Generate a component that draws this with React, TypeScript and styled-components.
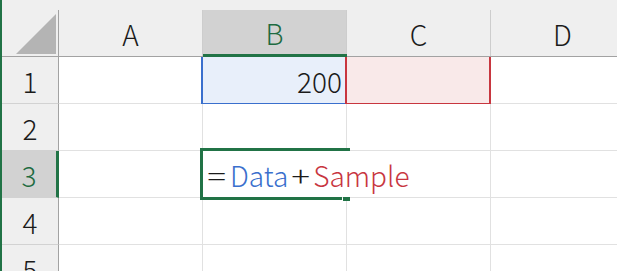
import React from "react";
import styled, { createGlobalStyle, css } from "styled-components";

const GREEN = "#217346";
const HEADER_BG = "#efefef";
const HEADER_SEL_BG = "#d2d2d2";
const HEADER_EDGE = "#a2a2a2";
const HEADER_SEP = "#cdcdcd";
const GRID_LINE = "#e1e1e1";

const Global = createGlobalStyle`
  html, body {
    margin: 0;
    padding: 0;
    background: #ffffff;
    overflow: hidden;
  }
  body {
    width: 617px;
    height: 271px;
    font-family: "Noto Sans CJK JP", "Noto Sans", sans-serif;
  }
`;

const Sheet = styled.div`
  display: flex;
  width: 617px;
  height: 271px;
  overflow: hidden;
`;

const ActiveEdge = styled.div`
  flex: 0 0 2px;
  background: ${GREEN};
`;

const Grid = styled.div`
  display: grid;
  grid-template-columns: 57px repeat(4, 144px);
  grid-template-rows: 57px;
  grid-auto-rows: 47px;
  font-size: 28px;
  font-weight: 300;
  color: #1b1b1b;
`;

const HeaderCell = styled.div<{ $selected?: boolean }>`
  box-sizing: border-box;
  padding-top: 10px;
  background: ${HEADER_BG};
  border-bottom: ${(p) => (p.$selected ? `3px solid ${GREEN}` : `1px solid ${HEADER_EDGE}`)};
`;

const HeaderLabel = styled.div<{ $selected?: boolean; $edge?: boolean }>`
  box-sizing: border-box;
  height: 100%;
  display: flex;
  align-items: center;
  justify-content: center;
  padding-top: 1px;
  background: ${(p) => (p.$selected ? HEADER_SEL_BG : HEADER_BG)};
  color: ${(p) => (p.$selected ? "#1e6b41" : "#1b1b1b")};
  border-right: 1px solid ${(p) => (p.$edge ? HEADER_EDGE : HEADER_SEP)};
  line-height: 1;
`;

const CornerMark = styled.svg`
  display: block;
  margin: 4px 0 0 14px;
  align-self: flex-start;
`;

const CornerLabel = styled(HeaderLabel)`
  justify-content: flex-start;
  align-items: flex-start;
  padding-top: 0;
`;

const RowHeader = styled.div<{ $selected?: boolean }>`
  box-sizing: border-box;
  display: flex;
  align-items: center;
  justify-content: center;
  padding-top: 1px;
  line-height: 1;
  background: ${(p) => (p.$selected ? HEADER_SEL_BG : HEADER_BG)};
  color: ${(p) => (p.$selected ? "#1e6b41" : "#1b1b1b")};
  border-right: ${(p) => (p.$selected ? `3px solid ${GREEN}` : `1px solid ${HEADER_EDGE}`)};
  border-bottom: 1px solid #d2d2d2;
`;

type RangeTone = "blue" | "red";

const rangeStyles: Record<RangeTone, { bg: string; line: string }> = {
  blue: { bg: "#e8effa", line: "#3a6fcd" },
  red: { bg: "#f9e9e9", line: "#c8363f" },
};

const Cell = styled.div<{ $align?: "left" | "right"; $range?: RangeTone }>`
  position: relative;
  box-sizing: border-box;
  display: flex;
  align-items: center;
  justify-content: ${(p) => (p.$align === "right" ? "flex-end" : "flex-start")};
  padding: 1px 4px 0 5px;
  line-height: 1;
  background: ${(p) => (p.$range ? rangeStyles[p.$range].bg : "#ffffff")};
  border-right: 1px solid ${GRID_LINE};
  border-bottom: 1px solid ${GRID_LINE};
  ${(p) =>
    p.$range &&
    css`
      &::after {
        content: "";
        position: absolute;
        top: 0;
        left: -2px;
        right: -1px;
        bottom: -2px;
        border: 2px solid ${rangeStyles[p.$range].line};
        border-top: none;
        pointer-events: none;
      }
    `}
`;

const Editor = styled.div`
  position: absolute;
  left: 0;
  top: 0;
  bottom: 0;
  z-index: 2;
  display: flex;
  align-items: center;
  padding: 1px 12px 0 5px;
  background: #ffffff;
  white-space: nowrap;
  line-height: 1;
`;

const Token = styled.span<{ $tone?: RangeTone }>`
  color: ${(p) => (p.$tone ? rangeStyles[p.$tone].line : "#1b1b1b")};
`;

const Operator = styled.span<{ $before?: number; $after?: number }>`
  color: #1b1b1b;
  margin-left: ${(p) => p.$before ?? 0}px;
  margin-right: ${(p) => p.$after ?? 0}px;
  display: inline-block;
  transform: scaleX(1.25);
`;

const SelectionFrame = styled.div`
  position: absolute;
  left: -3px;
  top: -3px;
  width: 150px;
  height: 49px;
  box-sizing: border-box;
  border-top: 3px solid ${GREEN};
  border-left: 3px solid ${GREEN};
  z-index: 3;
  pointer-events: none;
`;

const SelectionBottom = styled.div`
  position: absolute;
  left: -3px;
  top: 46px;
  width: 142px;
  height: 3px;
  background: ${GREEN};
  z-index: 3;
`;

const FillHandle = styled.div`
  position: absolute;
  left: 140px;
  top: 46px;
  width: 7px;
  height: 4px;
  background: ${GREEN};
  z-index: 3;
`;

const columns = ["A", "B", "C", "D"];

export default function App() {
  return (
    <>
      <Global />
      <Sheet>
        <ActiveEdge />
        <Grid>
          <HeaderCell>
            <CornerLabel $edge>
              <CornerMark width="40" height="40" viewBox="0 0 40 40">
                <polygon points="40,0 40,40 0,40" fill="#b4b4b4" />
              </CornerMark>
            </CornerLabel>
          </HeaderCell>
          {columns.map((c) => (
            <HeaderCell key={c} $selected={c === "B"}>
              <HeaderLabel $selected={c === "B"}>{c}</HeaderLabel>
            </HeaderCell>
          ))}

          <RowHeader>1</RowHeader>
          <Cell />
          <Cell $align="right" $range="blue">200</Cell>
          <Cell $range="red" />
          <Cell />

          <RowHeader>2</RowHeader>
          <Cell />
          <Cell />
          <Cell />
          <Cell />

          <RowHeader $selected>3</RowHeader>
          <Cell />
          <Cell>
            <Editor>
              <Operator $before={1} $after={6}>=</Operator>
              <Token $tone="blue">Data</Token>
              <Operator $before={5} $after={5}>+</Operator>
              <Token $tone="red">Sample</Token>
            </Editor>
            <SelectionFrame />
            <SelectionBottom />
            <FillHandle />
          </Cell>
          <Cell />
          <Cell />

          <RowHeader>4</RowHeader>
          <Cell />
          <Cell />
          <Cell />
          <Cell />

          <RowHeader>5</RowHeader>
          <Cell />
          <Cell />
          <Cell />
          <Cell />
        </Grid>
      </Sheet>
    </>
  );
}
